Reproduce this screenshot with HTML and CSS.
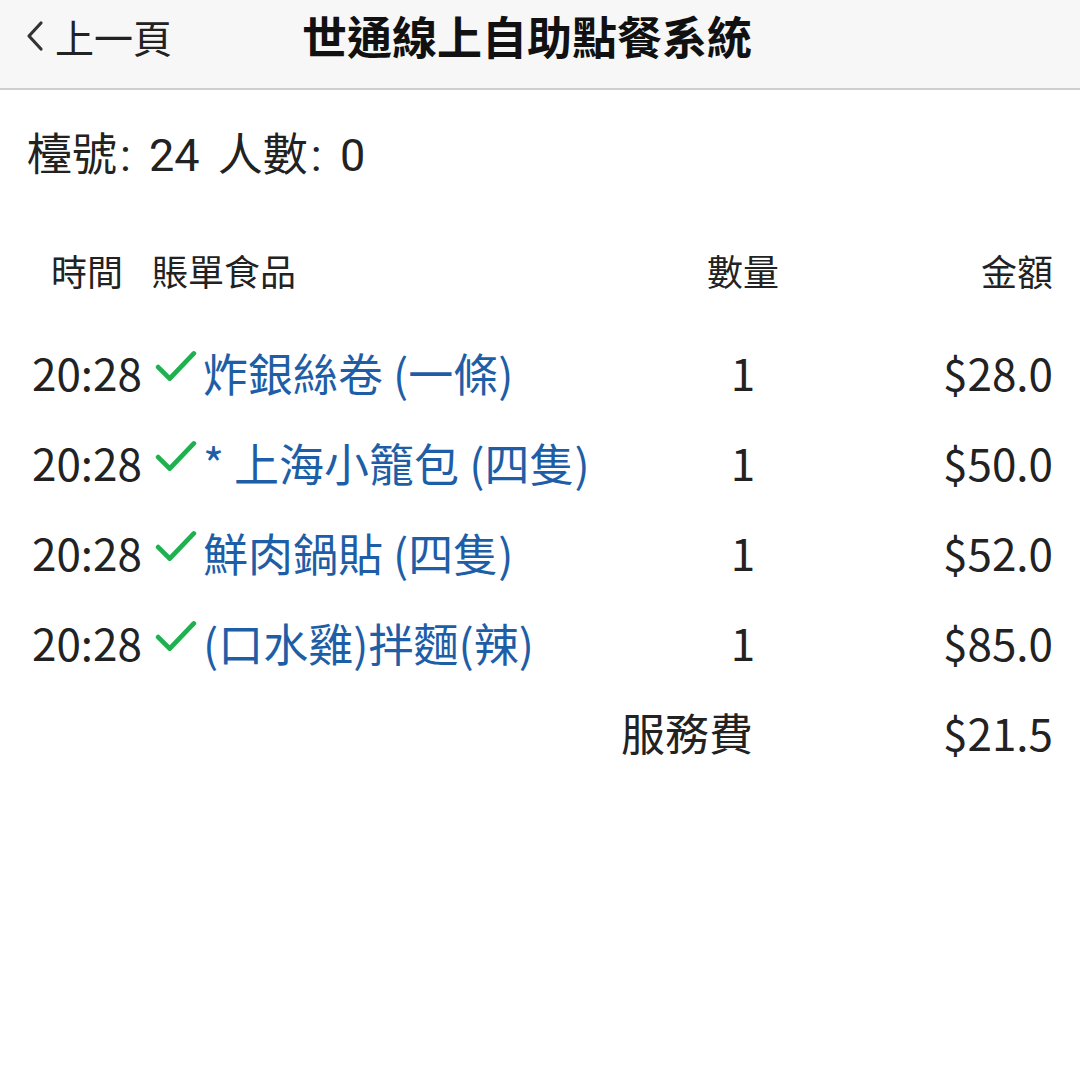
FILE: index.html
```html
<!DOCTYPE html>
<html lang="zh-Hant">
<head>
<meta charset="utf-8">
<link rel="stylesheet" href="styles.css">
</head>
<body>
<header class="topbar">
  <a class="back">
    <svg class="chev" width="20" height="34" viewBox="0 0 20 34"><path d="M16 4 L4 17 L16 30" fill="none" stroke="#333" stroke-width="3.2" stroke-linecap="round" stroke-linejoin="round"/></svg>
    <span>上一頁</span>
  </a>
  <h1 class="title">世通線上自助點餐系統</h1>
</header>
<main class="content">
  <div class="info">檯號<span class="colon">:</span> 24 人數<span class="colon">:</span> 0</div>
  <div class="grid head">
    <div class="c-time">時間</div>
    <div class="c-food">賬單食品</div>
    <div class="c-qty">數量</div>
    <div class="c-amt">金額</div>
  </div>
  <div class="grid row">
    <div class="c-time">20:28</div>
    <div class="c-food"><svg class="check" viewBox="0 0 40 32"><path d="M3 17 L14 28 L37 4" fill="none" stroke="#1fb14f" stroke-width="4.5" stroke-linecap="round" stroke-linejoin="round"/></svg><span class="name">炸銀絲卷 (一條)</span></div>
    <div class="c-qty">1</div>
    <div class="c-amt">$28.0</div>
  </div>
  <div class="grid row">
    <div class="c-time">20:28</div>
    <div class="c-food"><svg class="check" viewBox="0 0 40 32"><path d="M3 17 L14 28 L37 4" fill="none" stroke="#1fb14f" stroke-width="4.5" stroke-linecap="round" stroke-linejoin="round"/></svg><span class="name">* 上海小籠包 (四隻)</span></div>
    <div class="c-qty">1</div>
    <div class="c-amt">$50.0</div>
  </div>
  <div class="grid row">
    <div class="c-time">20:28</div>
    <div class="c-food"><svg class="check" viewBox="0 0 40 32"><path d="M3 17 L14 28 L37 4" fill="none" stroke="#1fb14f" stroke-width="4.5" stroke-linecap="round" stroke-linejoin="round"/></svg><span class="name">鮮肉鍋貼 (四隻)</span></div>
    <div class="c-qty">1</div>
    <div class="c-amt">$52.0</div>
  </div>
  <div class="grid row">
    <div class="c-time">20:28</div>
    <div class="c-food"><svg class="check" viewBox="0 0 40 32"><path d="M3 17 L14 28 L37 4" fill="none" stroke="#1fb14f" stroke-width="4.5" stroke-linecap="round" stroke-linejoin="round"/></svg><span class="name">(口水雞)拌麵(辣)</span></div>
    <div class="c-qty">1</div>
    <div class="c-amt">$85.0</div>
  </div>
  <div class="grid row fee">
    <div class="c-feelabel">服務費</div>
    <div class="c-amt">$21.5</div>
  </div>
</main>
</body>
</html>
```

FILE: styles.css
```css
* { box-sizing: border-box; }
html, body { margin: 0; padding: 0; background: #fff; }
body {
  width: 1080px;
  height: 1080px;
  font-family: "Noto Sans CJK TC", "Noto Sans", sans-serif;
  color: #222;
}
.topbar {
  height: 90px;
  background: #f7f7f7;
  border-bottom: 2px solid #cfcfcf;
  display: flex;
  align-items: flex-start;
  padding-left: 25px;
}
.back {
  display: flex;
  align-items: center;
  gap: 10px;
  font-size: 39px;
  color: #222;
  height: 72px;
}
.chev { display: block; }
.title {
  margin: 0 0 0 130px;
  font-size: 45px;
  font-weight: 700;
  color: #111;
  height: 72px;
  line-height: 72px;
}
.content { padding: 0 27px; }
.info {
  font-family: Roboto, "Noto Sans CJK TC", sans-serif;
  font-size: 45px;
  height: 132px;
  line-height: 132px;
  word-spacing: 7px;
}
.colon { margin-left: 3px; }
.grid {
  display: grid;
  grid-template-columns: 120px 1fr 140px 240px;
  align-items: center;
}
.head {
  font-size: 36px;
  height: 96px;
  margin-bottom: 9px;
}
.row {
  font-size: 44px;
  height: 90px;
}
.c-time { text-align: center; }
.head .c-food { padding-left: 5px; }
.c-food { display: flex; align-items: center; }
.c-qty { text-align: center; }
.c-amt { text-align: right; }
.check { width: 42px; height: 34px; margin: 0 6px 12px 8px; flex: none; }
.name { color: #1e5ea6; font-size: 45px; }
.fee .c-feelabel { grid-column: 1 / 4; text-align: right; padding-right: 60px; }
```
